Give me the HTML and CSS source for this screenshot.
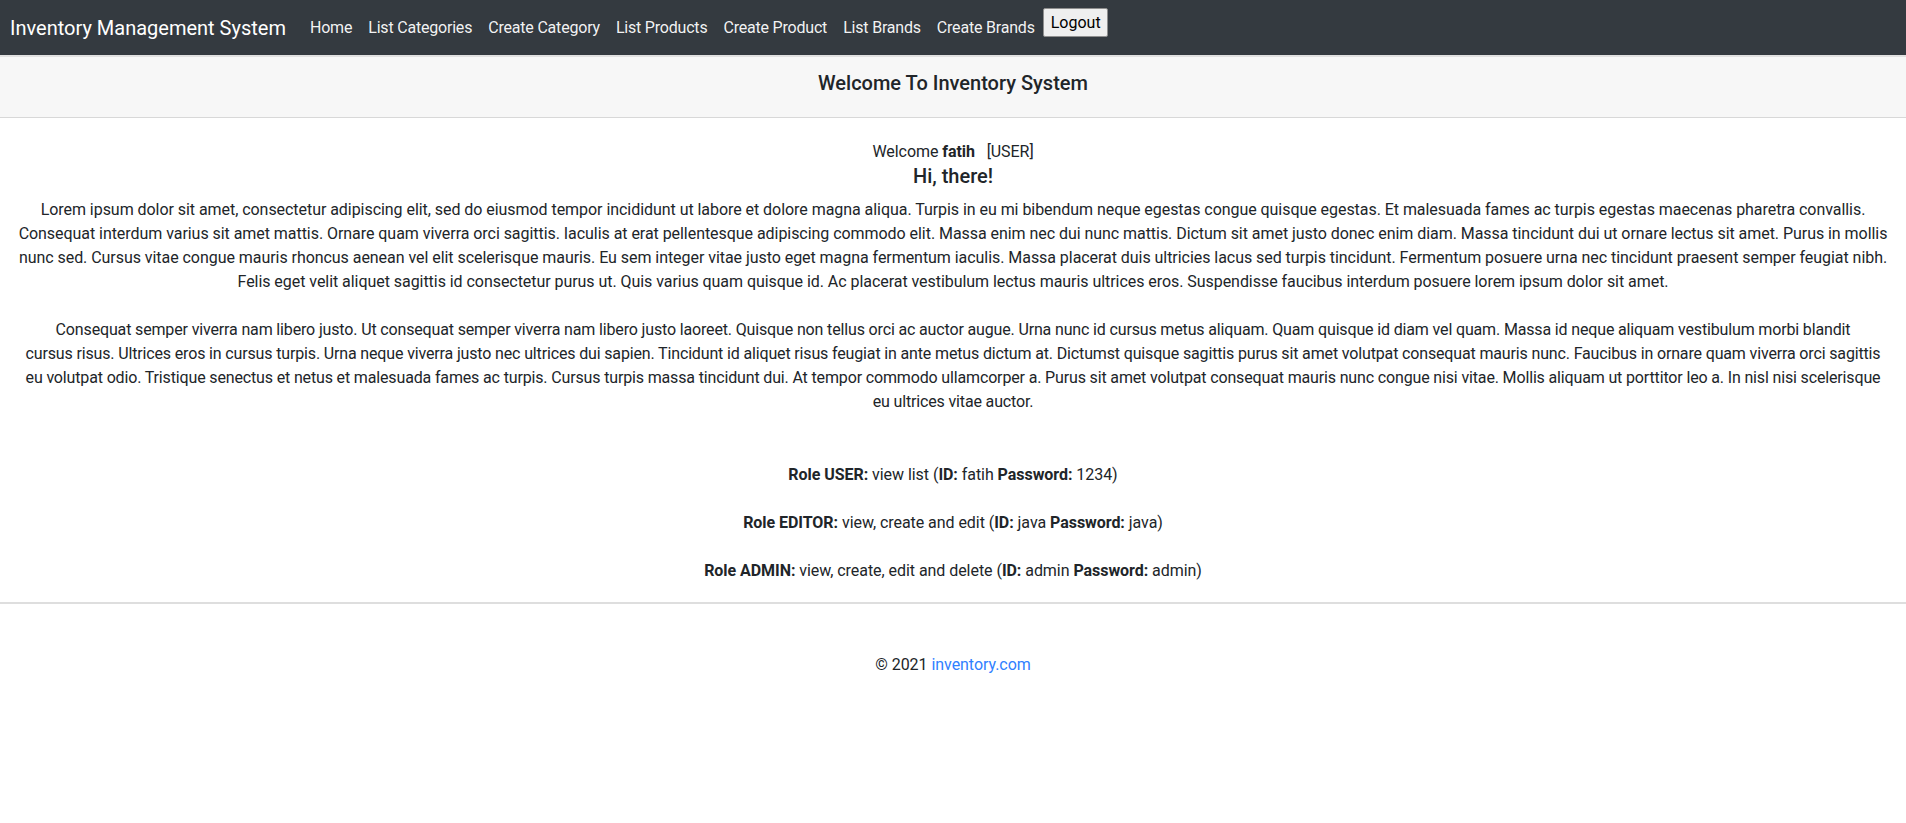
FILE: index.html
```html
<!DOCTYPE html>
<html lang="en">
<head>
<meta charset="utf-8">
<title>Inventory Management System</title>
<link rel="stylesheet" href="styles.css">
</head>
<body>
<nav class="navbar">
  <a class="brand" href="#">Inventory Management System</a>
  <ul class="nav">
    <li><a class="nav-link" href="#">Home</a></li>
    <li><a class="nav-link" href="#">List Categories</a></li>
    <li><a class="nav-link" href="#">Create Category</a></li>
    <li><a class="nav-link" href="#">List Products</a></li>
    <li><a class="nav-link" href="#">Create Product</a></li>
    <li><a class="nav-link" href="#">List Brands</a></li>
    <li><a class="nav-link" href="#">Create Brands</a></li>
    <li><form class="logout-form"><button class="logout" type="button">Logout</button></form></li>
  </ul>
</nav>

<header class="page-header">
  <h5 class="page-title">Welcome To Inventory System</h5>
</header>

<main class="content">
  <div class="welcome">Welcome <b>fatih</b>&nbsp;&nbsp;&nbsp;[USER]</div>
  <h5 class="greeting">Hi, there!</h5>
  <p class="lead-text">Lorem ipsum dolor sit amet, consectetur adipiscing elit, sed do eiusmod tempor incididunt ut labore et dolore magna aliqua. Turpis in eu mi bibendum neque egestas congue quisque egestas. Et malesuada fames ac turpis egestas maecenas pharetra convallis. Consequat interdum varius sit amet mattis. Ornare quam viverra orci sagittis. Iaculis at erat pellentesque adipiscing commodo elit. Massa enim nec dui nunc mattis. Dictum sit amet justo donec enim diam. Massa tincidunt dui ut ornare lectus sit amet. Purus in mollis nunc sed. Cursus vitae congue mauris rhoncus aenean vel elit scelerisque mauris. Eu sem integer vitae justo eget magna fermentum iaculis. Massa placerat duis ultricies lacus sed turpis tincidunt. Fermentum posuere urna nec tincidunt praesent semper feugiat nibh. Felis eget velit aliquet sagittis id consectetur purus ut. Quis varius quam quisque id. Ac placerat vestibulum lectus mauris ultrices eros. Suspendisse faucibus interdum posuere lorem ipsum dolor sit amet.</p>
  <p class="lead-text lead-tight">Consequat semper viverra nam libero justo. Ut consequat semper viverra nam libero justo laoreet. Quisque non tellus orci ac auctor augue. Urna nunc id cursus metus aliquam. Quam quisque id diam vel quam. Massa id neque aliquam vestibulum morbi blandit<br>cursus risus. Ultrices eros in cursus turpis. Urna neque viverra justo nec ultrices dui sapien. Tincidunt id aliquet risus feugiat in ante metus dictum at. Dictumst quisque sagittis purus sit amet volutpat consequat mauris nunc. Faucibus in ornare quam viverra orci sagittis<br>eu volutpat odio. Tristique senectus et netus et malesuada fames ac turpis. Cursus turpis massa tincidunt dui. At tempor commodo ullamcorper a. Purus sit amet volutpat consequat mauris nunc congue nisi vitae. Mollis aliquam ut porttitor leo a. In nisl nisi scelerisque<br>eu ultrices vitae auctor.</p>

  <div class="roles">
    <p class="role"><b>Role USER:</b> view list (<b>ID:</b> fatih <b>Password:</b> 1234)</p>
    <p class="role"><b>Role EDITOR:</b> view, create and edit (<b>ID:</b> java <b>Password:</b> java)</p>
    <p class="role"><b>Role ADMIN:</b> view, create, edit and delete (<b>ID:</b> admin <b>Password:</b> admin)</p>
  </div>
</main>

<hr class="divider">

<footer class="footer">
  © 2021 <a class="footer-link" href="#">inventory.com</a>
</footer>
</body>
</html>
```

FILE: styles.css
```css
* { box-sizing: border-box; }

body {
  margin: 0;
  font-family: Roboto, "Liberation Sans", Arial, sans-serif;
  font-size: 16px;
  line-height: 24px;
  color: #212529;
  background: #fff;
  letter-spacing: -0.05px;
}

a { text-decoration: none; }

/* Navbar */
.navbar {
  display: flex;
  align-items: flex-start;
  background: #343a40;
  padding: 7.5px 8px;
  height: 55px;
}

.brand {
  color: #fff;
  font-size: 20px;
  line-height: 30px;
  padding: 5px 0;
  margin: 0 16px 0 2px;
  white-space: nowrap;
  letter-spacing: 0;
}

.nav {
  display: flex;
  align-items: flex-start;
  list-style: none;
  margin: 0;
  padding: 0;
}

.nav-link {
  display: block;
  color: rgba(255, 255, 255, 0.95);
  padding: 8px;
  line-height: 24px;
  white-space: nowrap;
  letter-spacing: -0.2px;
}

.logout-form { margin: 0; }

.logout {
  display: block;
  font-family: Roboto, "Liberation Sans", Arial, sans-serif;
  font-size: 16px;
  line-height: 23px;
  color: #000;
  background: #efefef;
  border: 1px solid #8f8f8f;
  border-radius: 2px;
  padding: 2px 7px;
  margin: 0;
  height: 29px;
  width: 65px;
}

/* Header band */
.page-header {
  background: #f7f7f7;
  border-top: 2px solid #e1e1e1;
  border-bottom: 1px solid #d8d8d8;
  padding: 14px 0;
  text-align: center;
}

.page-title {
  margin: 0 0 8px;
  font-size: 20px;
  line-height: 24px;
  font-weight: 500;
  letter-spacing: 0;
}

/* Main content */
.content {
  padding: 22px 12px 0;
  text-align: center;
}

.welcome {
  line-height: 24px;
}

.welcome b { font-weight: 700; }

.greeting {
  margin: 0 0 10px;
  font-size: 20px;
  line-height: 24px;
  font-weight: 500;
  letter-spacing: 0;
}

.lead-text {
  margin: 0 0 24px;
}

.lead-tight {
  letter-spacing: -0.15px;
}

.roles {
  padding-top: 25px;
}

.role {
  margin: 0 0 24px;
}

.role:last-child { margin-bottom: 19px; }

.divider {
  margin: 0;
  border: 0;
  border-top: 2px solid #dedede;
}

.footer {
  text-align: center;
  padding: 49px 0 0;
}

.footer-link {
  color: #2f80ff;
}
```
